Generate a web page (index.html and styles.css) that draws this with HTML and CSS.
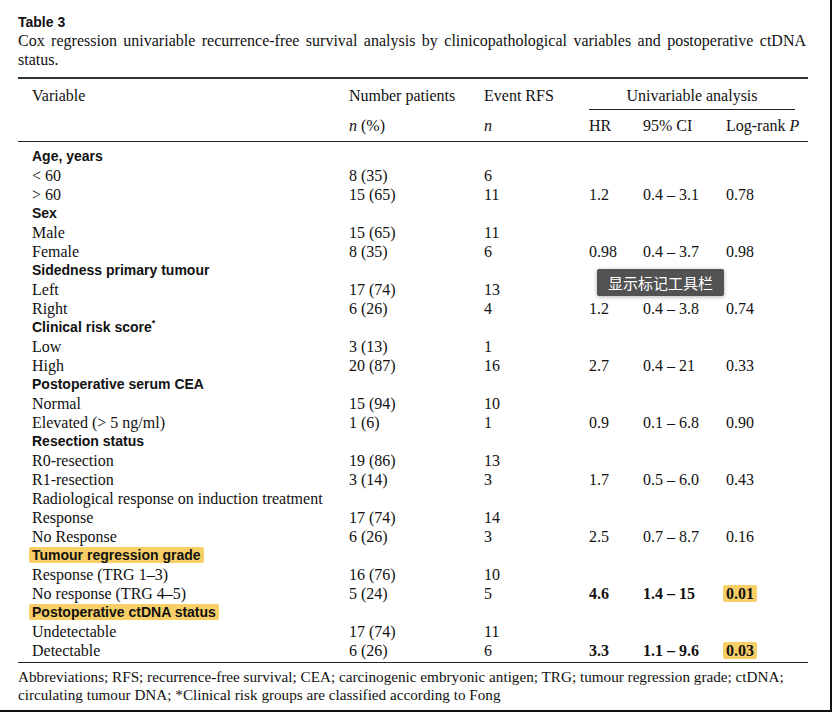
FILE: index.html
```html
<!DOCTYPE html>
<html>
<head>
<meta charset="utf-8">
<link rel="stylesheet" href="styles.css">
</head>
<body>
<div class="page">
  <div class="title">Table 3</div>
  <p class="caption">Cox regression univariable recurrence-free survival analysis by clinicopathological variables and postoperative ctDNA status.</p>
  <table class="tbl">
    <colgroup>
      <col class="c1"><col class="c2"><col class="c3"><col class="c4"><col class="c5"><col class="c6">
    </colgroup>
    <thead>
      <tr class="h1">
        <th class="first">Variable</th>
        <th>Number patients</th>
        <th>Event RFS</th>
        <th colspan="3" class="span"><div class="uni">Univariable analysis</div></th>
      </tr>
      <tr class="h2">
        <th class="first"></th>
        <th><i>n</i> (%)</th>
        <th><i>n</i></th>
        <th>HR</th>
        <th>95% CI</th>
        <th>Log-rank <i>P</i></th>
      </tr>
    </thead>
    <tbody>
      <tr class="sec top"><td class="first">Age, years</td><td></td><td></td><td></td><td></td><td></td></tr>
      <tr><td class="first">&lt; 60</td><td>8 (35)</td><td>6</td><td></td><td></td><td></td></tr>
      <tr><td class="first">&gt; 60</td><td>15 (65)</td><td>11</td><td>1.2</td><td>0.4 – 3.1</td><td>0.78</td></tr>
      <tr class="sec"><td class="first">Sex</td><td></td><td></td><td></td><td></td><td></td></tr>
      <tr><td class="first">Male</td><td>15 (65)</td><td>11</td><td></td><td></td><td></td></tr>
      <tr><td class="first">Female</td><td>8 (35)</td><td>6</td><td>0.98</td><td>0.4 – 3.7</td><td>0.98</td></tr>
      <tr class="sec"><td class="first">Sidedness primary tumour</td><td></td><td></td><td></td><td></td><td></td></tr>
      <tr><td class="first">Left</td><td>17 (74)</td><td>13</td><td></td><td></td><td></td></tr>
      <tr><td class="first">Right</td><td>6 (26)</td><td>4</td><td>1.2</td><td>0.4 – 3.8</td><td>0.74</td></tr>
      <tr class="sec"><td class="first">Clinical risk score<sup>*</sup></td><td></td><td></td><td></td><td></td><td></td></tr>
      <tr><td class="first">Low</td><td>3 (13)</td><td>1</td><td></td><td></td><td></td></tr>
      <tr><td class="first">High</td><td>20 (87)</td><td>16</td><td>2.7</td><td>0.4 – 21</td><td>0.33</td></tr>
      <tr class="sec"><td class="first">Postoperative serum CEA</td><td></td><td></td><td></td><td></td><td></td></tr>
      <tr><td class="first">Normal</td><td>15 (94)</td><td>10</td><td></td><td></td><td></td></tr>
      <tr><td class="first">Elevated (&gt; 5 ng/ml)</td><td>1 (6)</td><td>1</td><td>0.9</td><td>0.1 – 6.8</td><td>0.90</td></tr>
      <tr class="sec"><td class="first">Resection status</td><td></td><td></td><td></td><td></td><td></td></tr>
      <tr><td class="first">R0-resection</td><td>19 (86)</td><td>13</td><td></td><td></td><td></td></tr>
      <tr><td class="first">R1-resection</td><td>3 (14)</td><td>3</td><td>1.7</td><td>0.5 – 6.0</td><td>0.43</td></tr>
      <tr><td class="first">Radiological response on induction treatment</td><td></td><td></td><td></td><td></td><td></td></tr>
      <tr><td class="first">Response</td><td>17 (74)</td><td>14</td><td></td><td></td><td></td></tr>
      <tr><td class="first">No Response</td><td>6 (26)</td><td>3</td><td>2.5</td><td>0.7 – 8.7</td><td>0.16</td></tr>
      <tr class="sec"><td class="first"><span class="hl">Tumour regression grade</span></td><td></td><td></td><td></td><td></td><td></td></tr>
      <tr><td class="first">Response (TRG 1–3)</td><td>16 (76)</td><td>10</td><td></td><td></td><td></td></tr>
      <tr><td class="first">No response (TRG 4–5)</td><td>5 (24)</td><td>5</td><td class="b">4.6</td><td class="b">1.4 – 15</td><td class="b"><span class="hl">0.01</span></td></tr>
      <tr class="sec"><td class="first"><span class="hl">Postoperative ctDNA status</span></td><td></td><td></td><td></td><td></td><td></td></tr>
      <tr><td class="first">Undetectable</td><td>17 (74)</td><td>11</td><td></td><td></td><td></td></tr>
      <tr class="last"><td class="first">Detectable</td><td>6 (26)</td><td>6</td><td class="b">3.3</td><td class="b">1.1 – 9.6</td><td class="b"><span class="hl">0.03</span></td></tr>
    </tbody>
  </table>
  <p class="foot">Abbreviations; RFS; recurrence-free survival; CEA; carcinogenic embryonic antigen; TRG; tumour regression grade; ctDNA; circulating tumour DNA; *Clinical risk groups are classified according to Fong</p>
  <div class="tooltip">显示标记工具栏</div>
</div>
</body>
</html>
```

FILE: styles.css
```css
html, body {
  margin: 0;
  padding: 0;
  background: #fff;
}
.page {
  position: relative;
  width: 832px;
  height: 712px;
  box-sizing: border-box;
  padding: 13px 24px 0 18px;
  border-right: 2px solid #111;
  border-bottom: 2px solid #111;
  font-family: "Liberation Serif", serif;
  font-size: 16px;
  color: #111;
  overflow: hidden;
}
.title {
  font-family: "Liberation Sans", sans-serif;
  font-weight: bold;
  font-size: 14px;
  line-height: 19px;
}
.caption {
  margin: 0;
  line-height: 18.5px;
  text-align: justify;
  font-size: 16px;
}
.tbl {
  margin-top: 8px;
  width: 790px;
  border-collapse: collapse;
  table-layout: fixed;
  border-top: 2px solid #333;
  border-bottom: 1px solid #222;
}
.c1 { width: 331px; }
.c2 { width: 135px; }
.c3 { width: 105px; }
.c4 { width: 54px; }
.c5 { width: 83px; }
.c6 { width: 82px; }
.tbl th, .tbl td {
  padding: 0;
  text-align: left;
  font-weight: normal;
  white-space: nowrap;
  vertical-align: middle;
}
.tbl .first { padding-left: 14px; }
.h1 th { height: 29px; padding-top: 2px; }
.h1 .span { padding-right: 13px; }
.uni {
  text-align: center;
  border-bottom: 1px solid #222;
  padding-bottom: 4px;
  padding-top: 5px;
}
.h2 th {
  height: 31px;
  border-bottom: 1px solid #222;
}
.tbl tbody td {
  height: 19px;
  line-height: 19px;
}
.tbl tbody tr.top td { padding-top: 5px; }
.tbl tbody tr.last td { padding-bottom: 2px; }
.sec td.first {
  font-family: "Liberation Sans", sans-serif;
  font-weight: bold;
  font-size: 14px;
}
.sec sup {
  font-size: 9px;
  line-height: 0;
}
.tbl td.b { font-weight: bold; }
.hl {
  background: #f8cf66;
  border-radius: 2px;
  padding: 0 3px;
  margin-left: -3px;
}
.foot {
  margin: 5px 0 0;
  line-height: 18px;
  font-size: 15.2px;
}
.tooltip {
  position: absolute;
  left: 597px;
  top: 269px;
  width: 127px;
  height: 27px;
  box-sizing: border-box;
  background: #525252;
  color: #fff;
  font-family: "Noto Sans CJK SC", sans-serif;
  font-size: 15px;
  line-height: 27px;
  text-align: center;
  border-radius: 2px;
  box-shadow: 0 1px 4px rgba(0,0,0,0.3);
}
```
